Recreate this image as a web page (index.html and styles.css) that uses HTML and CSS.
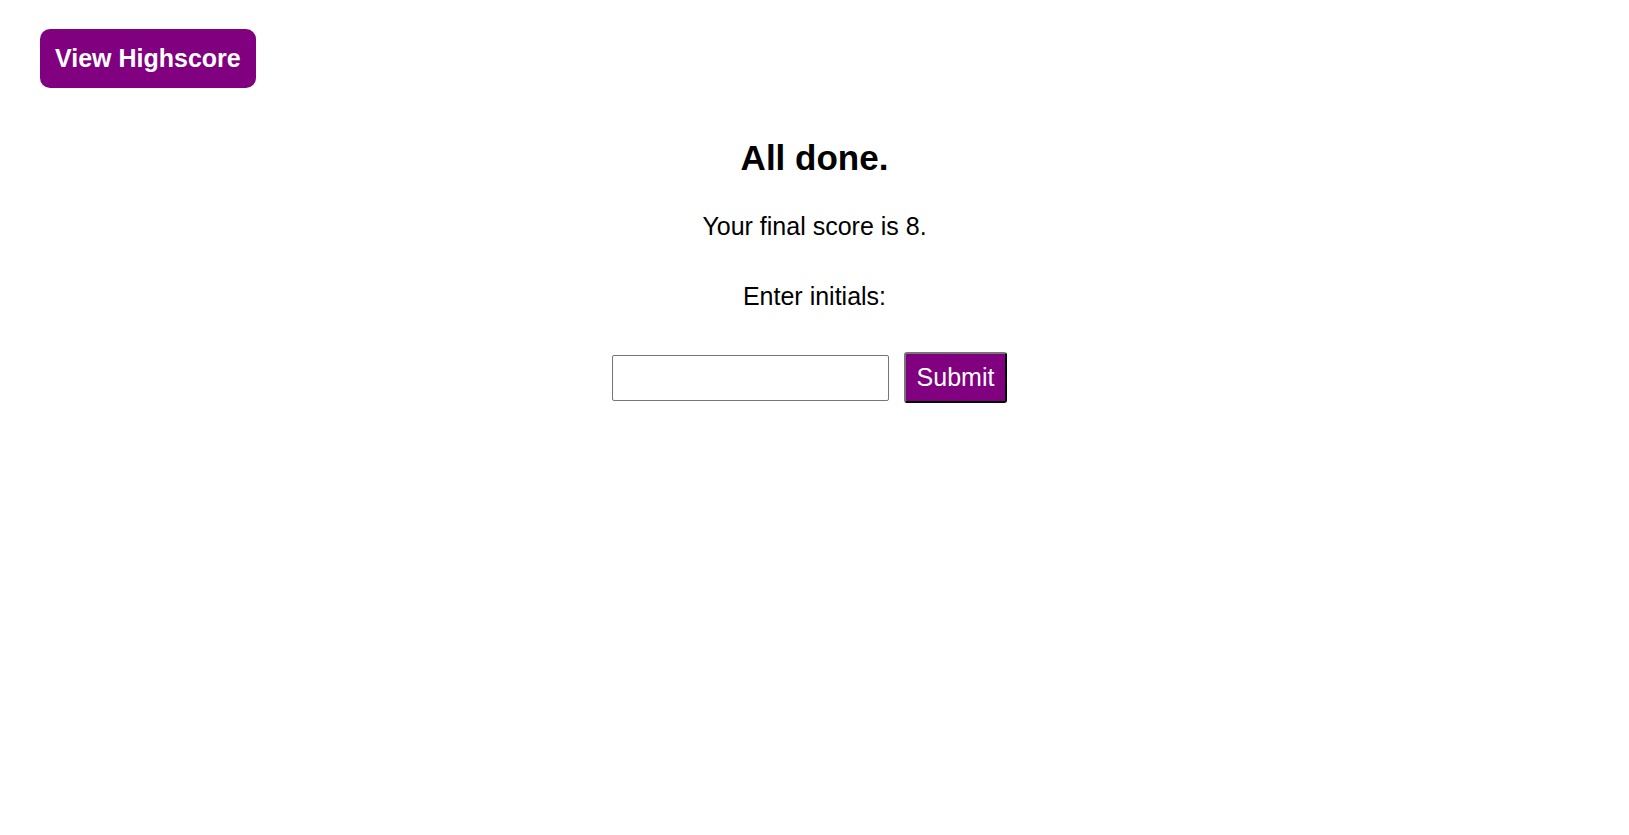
FILE: index.html
```html
<!DOCTYPE html>
<html lang="en">
<head>
<meta charset="utf-8">
<title>Quiz</title>
<link rel="stylesheet" href="styles.css">
</head>
<body>
<header class="top">
  <button class="highscore-btn" type="button">View Highscore</button>
</header>
<main class="done">
  <h2 class="done-title">All done.</h2>
  <p class="score">Your final score is 8.</p>
  <p class="label">Enter initials:</p>
  <form class="entry">
    <input class="initials" type="text">
    <button class="submit" type="button">Submit</button>
  </form>
</main>
</body>
</html>
```
FILE: styles.css
```css
html, body {
  margin: 0;
  padding: 0;
  background: #ffffff;
}
body {
  font-family: "Liberation Sans", Arial, Helvetica, sans-serif;
  color: #000;
}
.top {
  padding: 29px 0 0 40px;
  display: flex;
}
.highscore-btn {
  font-family: "Liberation Sans", Arial, sans-serif;
  font-size: 25px;
  font-weight: bold;
  line-height: 27px;
  color: #fff;
  background: #800080;
  border: none;
  border-radius: 10px;
  padding: 16px 15px;
  height: 59px;
  cursor: pointer;
}
.done {
  text-align: center;
}
.done-title {
  margin: 50px 0 0;
  font-size: 35px;
  line-height: 40px;
  font-weight: bold;
}
.score {
  margin: 34px 0 0;
  font-size: 25px;
  line-height: 28px;
}
.label {
  margin: 42px 0 0;
  font-size: 25px;
  line-height: 28px;
}
.entry {
  margin: 42px 0 0;
  display: flex;
  justify-content: center;
  align-items: center;
  gap: 15px;
  padding-right: 10px;
}
.initials {
  box-sizing: border-box;
  width: 277px;
  height: 46px;
  border: 1px solid #767676;
  border-radius: 2px;
  font-size: 24px;
  font-family: "Liberation Sans", Arial, sans-serif;
  padding: 2px 6px;
  margin: 0;
}
.submit {
  box-sizing: border-box;
  height: 51px;
  width: 103px;
  font-family: "Liberation Sans", Arial, sans-serif;
  font-size: 25px;
  line-height: 27px;
  color: #fff;
  background: #800080;
  border: 2px outset #767676;
  border-color: #767676 #222 #222 #767676;
  border-radius: 3px;
  padding: 10px 0;
  margin: 0;
}
```
